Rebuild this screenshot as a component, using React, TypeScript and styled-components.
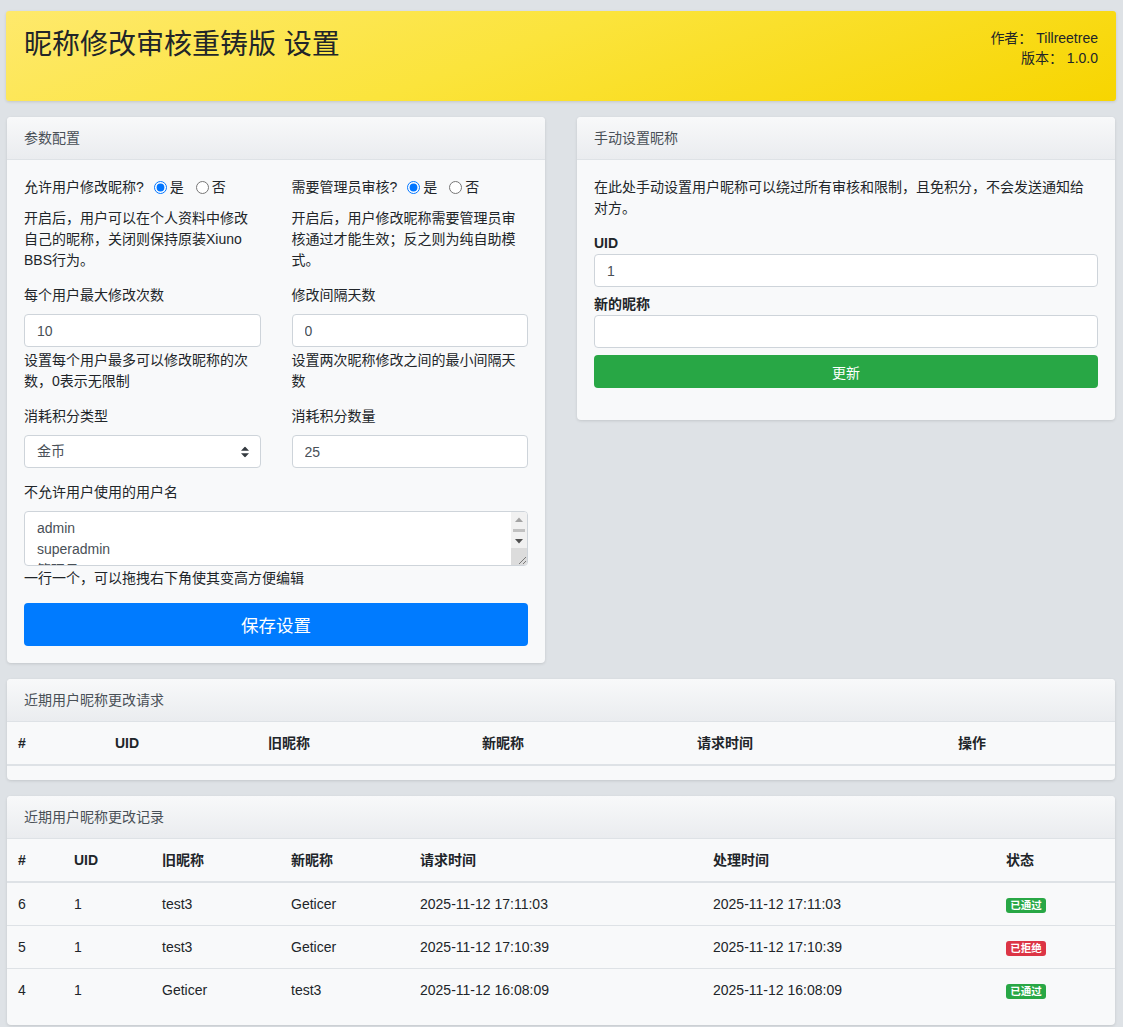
import React from "react";
import styled, { createGlobalStyle } from "styled-components";

const GlobalStyle = createGlobalStyle`
  * { box-sizing: border-box; }
  body {
    margin: 0;
    background: #dee2e6;
    color: #212529;
    font-family: "Liberation Sans", "Noto Sans CJK SC", sans-serif;
    font-size: 14px;
    line-height: 1.5;
  }
`;

const Page = styled.div`
  display: flex;
  flex-direction: column;
  gap: 16px;
  padding: 11px 8px 16px 7px;
`;

const Hero = styled.div`
  display: flex;
  justify-content: space-between;
  align-items: flex-start;
  height: 90px;
  margin: 0 -1px;
  padding: 17px 18px;
  border-radius: 3px;
  background: linear-gradient(160deg, #fee96c 0%, #fbe43c 45%, #f7d500 100%);
  box-shadow: 0 1px 3px rgba(0, 0, 0, 0.12);
`;

const Title = styled.h1`
  margin: 0;
  font-size: 28px;
  font-weight: 400;
  line-height: 1.2;
  color: #212529;
`;

const Meta = styled.div`
  text-align: right;
  font-size: 14px;
  line-height: 20px;
  color: #212529;
`;

const Columns = styled.div`
  display: grid;
  grid-template-columns: 1fr 1fr;
  column-gap: 32px;
  align-items: start;
`;

const Card = styled.section`
  background: #f8f9fa;
  border-radius: 4px;
  box-shadow: 0 1px 3px rgba(0, 0, 0, 0.12);
  overflow: hidden;
`;

const CardHeader = styled.div`
  padding: 11px 17px;
  line-height: 20px;
  font-size: 14px;
  color: #495057;
  background: linear-gradient(#f8f9fa, #eaecef);
  border-bottom: 1px solid #dee2e6;
`;

const CardBody = styled.div<{ $extra?: number }>`
  padding: 17px 17px ${(p) => 17 + (p.$extra ?? 0)}px;
`;

const FormGrid = styled.div`
  display: grid;
  grid-template-columns: 1fr 1fr;
  column-gap: 31px;
`;

const Group = styled.div<{ $gap?: number; $top?: number }>`
  margin-top: ${(p) => p.$top ?? 0}px;
  margin-bottom: ${(p) => p.$gap ?? 14}px;
`;

const RadioLine = styled.div`
  display: flex;
  align-items: center;
  height: 21px;
  white-space: nowrap;
`;

const RadioLabel = styled.label`
  display: inline-flex;
  align-items: center;
  margin-left: 12px;
  &:first-of-type {
    margin-left: 10px;
  }
  input {
    margin: 0 3px 0 0;
    width: 13px;
    height: 13px;
  }
`;

const Desc = styled.p<{ $top?: number; $max?: number }>`
  margin: ${(p) => p.$top ?? 0}px 0 0;
  max-width: ${(p) => (p.$max ? `${p.$max}px` : "none")};
`;

const Label = styled.label<{ $bold?: boolean; $gap?: number }>`
  display: block;
  margin-bottom: ${(p) => p.$gap ?? 8}px;
  font-weight: ${(p) => (p.$bold ? 700 : 400)};
`;

const Input = styled.input`
  display: block;
  width: 100%;
  height: 33px;
  padding: 0 12px;
  font: inherit;
  color: #495057;
  background: #fff;
  border: 1px solid #ced4da;
  border-radius: 4px;
  outline: none;
`;

const SelectWrap = styled.div`
  position: relative;
  svg {
    position: absolute;
    right: 12px;
    top: 50%;
    transform: translateY(-50%);
    pointer-events: none;
  }
`;

const Select = styled.select`
  display: block;
  width: 100%;
  height: 33px;
  padding: 0 12px;
  font: inherit;
  color: #495057;
  background: #fff;
  border: 1px solid #ced4da;
  border-radius: 4px;
  appearance: none;
  outline: none;
`;

const AreaWrap = styled.div`
  position: relative;
`;

const TextArea = styled.textarea`
  display: block;
  width: 100%;
  height: 55px;
  padding: 6px 28px 6px 12px;
  font: inherit;
  line-height: 21px;
  color: #495057;
  background: #fff;
  border: 1px solid #ced4da;
  border-radius: 4px;
  outline: none;
  resize: none;
  overflow: hidden;
`;

/* the browser hides native scrollbars in the screenshot, so draw one over the textarea */
const ScrollBar = styled.div`
  position: absolute;
  top: 1px;
  right: 1px;
  bottom: 1px;
  width: 16px;
  display: flex;
  flex-direction: column;
  background: #f1f1f1;
  border-top-right-radius: 3px;
  border-bottom-right-radius: 3px;
  overflow: hidden;
  pointer-events: none;
`;

const ScrollArrow = styled.div`
  height: 14px;
  display: flex;
  align-items: center;
  justify-content: center;
`;

const ScrollTrack = styled.div`
  height: 8px;
  display: flex;
  align-items: center;
  padding: 0 2px;
  &::after {
    content: "";
    flex: 1;
    height: 3px;
    background: #c1c1c1;
  }
`;

const ScrollCorner = styled.div`
  flex: 1;
  background: #dcdcdc;
  display: flex;
  align-items: flex-end;
  justify-content: flex-end;
`;

const Help = styled.div<{ $top?: number }>`
  margin-top: ${(p) => p.$top ?? 3}px;
`;

const Button = styled.button<{ $color: string; $big?: boolean }>`
  display: block;
  width: 100%;
  height: ${(p) => (p.$big ? 43 : 33)}px;
  margin-top: ${(p) => (p.$big ? 14 : 7)}px;
  border: none;
  border-radius: 4px;
  background: ${(p) => p.$color};
  color: #fff;
  font-family: inherit;
  font-size: ${(p) => (p.$big ? 17.5 : 14)}px;
  cursor: pointer;
`;

const Table = styled.table<{ $gap?: number }>`
  width: 100%;
  border-collapse: collapse;
  table-layout: fixed;
  margin-bottom: ${(p) => p.$gap ?? 14}px;
`;

const Th = styled.th<{ $w: number }>`
  width: ${(p) => p.$w}px;
  padding: 11px 11px 10px;
  text-align: left;
  font-weight: 700;
  line-height: 21px;
  border-bottom: 2px solid #dee2e6;
`;

const Td = styled.td`
  padding: 11px 11px 10px;
  line-height: 21px;
  border-top: 1px solid #dee2e6;
  vertical-align: middle;
`;

const Badge = styled.span<{ $tone: "ok" | "no" }>`
  display: inline-block;
  padding: 2.5px 4.2px;
  font-size: 10.5px;
  font-weight: 700;
  line-height: 1;
  color: #fff;
  border-radius: 3px;
  background: ${(p) => (p.$tone === "ok" ? "#28a745" : "#dc3545")};
  vertical-align: middle;
`;

const SelectArrows = () => (
  <svg width="8" height="11" viewBox="0 0 8 11">
    <path d="M4 0 L8 4.2 H0 Z M4 11 L0 6.8 H8 Z" fill="#343a40" />
  </svg>
);

const FakeScrollBar = () => (
  <ScrollBar>
    <ScrollArrow>
      <svg width="8" height="5" viewBox="0 0 8 5">
        <path d="M0 5 L4 0.5 L8 5 Z" fill="#a3a3a3" />
      </svg>
    </ScrollArrow>
    <ScrollTrack />
    <ScrollArrow>
      <svg width="8" height="5" viewBox="0 0 8 5">
        <path d="M0 0 L8 0 L4 4.5 Z" fill="#505050" />
      </svg>
    </ScrollArrow>
    <ScrollCorner>
      <svg width="10" height="10" viewBox="0 0 10 10">
        <path d="M2 9 L9 2 M6 9 L9 6" stroke="#7a7a7a" strokeWidth="1" />
      </svg>
    </ScrollCorner>
  </ScrollBar>
);

const requestCols = [
  ["#", 97],
  ["UID", 153],
  ["旧昵称", 214],
  ["新昵称", 215],
  ["请求时间", 261],
  ["操作", 168],
] as const;

const logCols = [
  ["#", 56],
  ["UID", 88],
  ["旧昵称", 129],
  ["新昵称", 129],
  ["请求时间", 293],
  ["处理时间", 293],
  ["状态", 120],
] as const;

const logs = [
  { id: 6, uid: 1, oldName: "test3", newName: "Geticer", req: "2025-11-12 17:11:03", done: "2025-11-12 17:11:03", ok: true },
  { id: 5, uid: 1, oldName: "test3", newName: "Geticer", req: "2025-11-12 17:10:39", done: "2025-11-12 17:10:39", ok: false },
  { id: 4, uid: 1, oldName: "Geticer", newName: "test3", req: "2025-11-12 16:08:09", done: "2025-11-12 16:08:09", ok: true },
];

export default function App() {
  return (
    <Page>
      <GlobalStyle />
      <Hero>
        <Title>昵称修改审核重铸版 设置</Title>
        <Meta>
          <div>作者： Tillreetree</div>
          <div>版本： 1.0.0</div>
        </Meta>
      </Hero>

      <Columns>
        <Card>
          <CardHeader>参数配置</CardHeader>
          <CardBody>
            <FormGrid>
              <Group>
                <RadioLine>
                  允许用户修改昵称?
                  <RadioLabel>
                    <input type="radio" name="allow" defaultChecked />是
                  </RadioLabel>
                  <RadioLabel>
                    <input type="radio" name="allow" />否
                  </RadioLabel>
                </RadioLine>
                <Desc $top={10}>开启后，用户可以在个人资料中修改自己的昵称，关闭则保持原装Xiuno BBS行为。</Desc>
              </Group>
              <Group>
                <RadioLine>
                  需要管理员审核?
                  <RadioLabel>
                    <input type="radio" name="review" defaultChecked />是
                  </RadioLabel>
                  <RadioLabel>
                    <input type="radio" name="review" />否
                  </RadioLabel>
                </RadioLine>
                <Desc $top={10}>开启后，用户修改昵称需要管理员审核通过才能生效；反之则为纯自助模式。</Desc>
              </Group>

              <Group>
                <Label>每个用户最大修改次数</Label>
                <Input defaultValue="10" />
                <Help>设置每个用户最多可以修改昵称的次数，0表示无限制</Help>
              </Group>
              <Group>
                <Label>修改间隔天数</Label>
                <Input defaultValue="0" />
                <Help>设置两次昵称修改之间的最小间隔天数</Help>
              </Group>

              <Group>
                <Label>消耗积分类型</Label>
                <SelectWrap>
                  <Select defaultValue="gold">
                    <option value="gold">金币</option>
                    <option value="exp">经验</option>
                  </Select>
                  <SelectArrows />
                </SelectWrap>
              </Group>
              <Group>
                <Label>消耗积分数量</Label>
                <Input defaultValue="25" />
              </Group>
            </FormGrid>

            <Group $gap={0}>
              <Label>不允许用户使用的用户名</Label>
              <AreaWrap>
                <TextArea defaultValue={"admin\nsuperadmin\n管理员\n超级管理员\nroot\nsystem"} />
                <FakeScrollBar />
              </AreaWrap>
              <Help $top={2}>一行一个，可以拖拽右下角使其变高方便编辑</Help>
            </Group>

            <Button $color="#007bff" $big>
              保存设置
            </Button>
          </CardBody>
        </Card>

        <Card>
          <CardHeader>手动设置昵称</CardHeader>
          <CardBody $extra={15}>
            <Desc $max={495}>在此处手动设置用户昵称可以绕过所有审核和限制，且免积分，不会发送通知给对方。</Desc>
            <Group $gap={7} $top={14}>
              <Label $bold $gap={0}>UID</Label>
              <Input defaultValue="1" />
            </Group>
            <Group $gap={0}>
              <Label $bold $gap={0}>新的昵称</Label>
              <Input />
            </Group>
            <Button $color="#28a745">更新</Button>
          </CardBody>
        </Card>
      </Columns>

      <Card>
        <CardHeader>近期用户昵称更改请求</CardHeader>
        <Table>
          <thead>
            <tr>
              {requestCols.map(([name, w]) => (
                <Th key={name} $w={w}>
                  {name}
                </Th>
              ))}
            </tr>
          </thead>
          <tbody />
        </Table>
      </Card>

      <Card>
        <CardHeader>近期用户昵称更改记录</CardHeader>
        <Table>
          <thead>
            <tr>
              {logCols.map(([name, w]) => (
                <Th key={name} $w={w}>
                  {name}
                </Th>
              ))}
            </tr>
          </thead>
          <tbody>
            {logs.map((r) => (
              <tr key={r.id}>
                <Td>{r.id}</Td>
                <Td>{r.uid}</Td>
                <Td>{r.oldName}</Td>
                <Td>{r.newName}</Td>
                <Td>{r.req}</Td>
                <Td>{r.done}</Td>
                <Td>
                  <Badge $tone={r.ok ? "ok" : "no"}>{r.ok ? "已通过" : "已拒绝"}</Badge>
                </Td>
              </tr>
            ))}
          </tbody>
        </Table>
      </Card>
    </Page>
  );
}
